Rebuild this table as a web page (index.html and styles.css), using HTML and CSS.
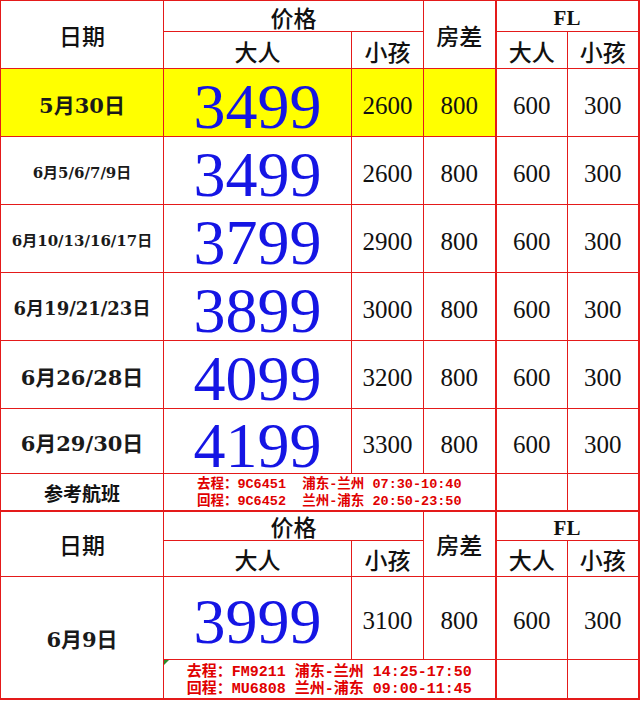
FILE: index.html
```html
<!DOCTYPE html>
<html lang="zh-CN">
<head>
<meta charset="utf-8">
<title>价格表</title>
<link rel="stylesheet" href="styles.css">
</head>
<body>
<table class="price">
  <colgroup>
    <col class="c-date">
    <col class="c-adult">
    <col class="c-child">
    <col class="c-room">
    <col class="c-fla">
    <col class="c-flc">
  </colgroup>
  <tbody>
    <tr class="h-top">
      <td class="head" rowspan="2">日期</td>
      <td class="head" colspan="2">价格</td>
      <td class="head" rowspan="2">房差</td>
      <td class="head fl sep" colspan="2">FL</td>
    </tr>
    <tr class="h-sub">
      <td class="head">大人</td>
      <td class="head">小孩</td>
      <td class="head sep">大人</td>
      <td class="head">小孩</td>
    </tr>
    <tr class="row">
      <td class="date d21 hl">5月30日</td>
      <td class="big hl">3499</td>
      <td class="num hl">2600</td>
      <td class="num hl">800</td>
      <td class="num sep">600</td>
      <td class="num">300</td>
    </tr>
    <tr class="row">
      <td class="date d15">6月5/6/7/9日</td>
      <td class="big">3499</td>
      <td class="num">2600</td>
      <td class="num">800</td>
      <td class="num sep">600</td>
      <td class="num">300</td>
    </tr>
    <tr class="row">
      <td class="date d15">6月10/13/16/17日</td>
      <td class="big">3799</td>
      <td class="num">2900</td>
      <td class="num">800</td>
      <td class="num sep">600</td>
      <td class="num">300</td>
    </tr>
    <tr class="row">
      <td class="date d18">6月19/21/23日</td>
      <td class="big">3899</td>
      <td class="num">3000</td>
      <td class="num">800</td>
      <td class="num sep">600</td>
      <td class="num">300</td>
    </tr>
    <tr class="row">
      <td class="date d21">6月26/28日</td>
      <td class="big">4099</td>
      <td class="num">3200</td>
      <td class="num">800</td>
      <td class="num sep">600</td>
      <td class="num">300</td>
    </tr>
    <tr class="row-last">
      <td class="date d21">6月29/30日</td>
      <td class="big">4199</td>
      <td class="num">3300</td>
      <td class="num">800</td>
      <td class="num sep">600</td>
      <td class="num">300</td>
    </tr>
    <tr class="flight-row">
      <td class="label">参考航班</td>
      <td class="flight" colspan="3">去程：9C6451&nbsp;&nbsp;浦东-兰州 07:30-10:40<br>回程：9C6452&nbsp;&nbsp;兰州-浦东 20:50-23:50</td>
      <td class="sep"></td>
      <td></td>
    </tr>
    <tr class="h-top2">
      <td class="head thick-top" rowspan="2">日期</td>
      <td class="head thick-top" colspan="2">价格</td>
      <td class="head thick-top" rowspan="2">房差</td>
      <td class="head fl sep thick-top" colspan="2">FL</td>
    </tr>
    <tr class="h-sub2">
      <td class="head">大人</td>
      <td class="head">小孩</td>
      <td class="head sep">大人</td>
      <td class="head">小孩</td>
    </tr>
    <tr class="row-tall">
      <td class="date d21 bottom" rowspan="2">6月9日</td>
      <td class="big">3999</td>
      <td class="num">3100</td>
      <td class="num">800</td>
      <td class="num sep">600</td>
      <td class="num">300</td>
    </tr>
    <tr class="flight-row2">
      <td class="flight flight-lg bottom" colspan="3"><span class="note"></span>去程：FM9211 浦东-兰州 14:25-17:50<br>回程：MU6808 兰州-浦东 09:00-11:45</td>
      <td class="sep bottom"></td>
      <td class="bottom"></td>
    </tr>
  </tbody>
</table>
</body>
</html>
```

FILE: styles.css
```css
html, body {
  margin: 0;
  padding: 0;
  background: #ffffff;
}

.price {
  border-collapse: collapse;
  table-layout: fixed;
  width: 639px;
  font-family: "Liberation Serif", "Noto Sans CJK SC", serif;
  color: #111111;
}

.c-date { width: 163px; }
.c-adult { width: 188px; }
.c-child { width: 72px; }
.c-room { width: 72px; }
.c-fla { width: 72px; }
.c-flc { width: 71px; }

.price td {
  border: 1px solid #e41a1a;
  padding: 5px 0 0 0;
  text-align: center;
  vertical-align: middle;
  line-height: 1;
  white-space: nowrap;
}

.price td:last-child {
  border-right: 2px solid #e41a1a;
}

.price td.sep {
  border-left: 2px solid #e41a1a;
}

.price td.thick-top {
  border-top: 2px solid #e41a1a;
}

.price td.bottom {
  border-bottom: 2px solid #e41a1a;
}

.h-top { height: 31px; }
.h-sub { height: 37px; }
.row { height: 68px; }
.row-last { height: 65px; }
.flight-row { height: 36px; }
.h-top2 { height: 29px; }
.h-sub2 { height: 36px; }
.row-tall { height: 83px; }
.flight-row2 { height: 39px; }

.head {
  font-family: "Noto Sans CJK SC", sans-serif;
  font-weight: 500;
  font-size: 23px;
}

.price td.head {
  padding-top: 2px;
}

.head.fl {
  font-family: "Liberation Serif", serif;
  font-weight: bold;
  font-size: 21px;
}

.price td.head.fl {
  padding-top: 5px;
}

.hl {
  background: #ffff00;
}

.date {
  font-family: "DejaVu Serif", "Noto Sans CJK SC", serif;
  font-weight: bold;
  color: #1a1a1a;
}

.d21 { font-size: 21px; }
.d18 { font-size: 18px; }
.d15 { font-size: 15px; }

.big {
  font-family: "Liberation Serif", serif;
  font-size: 64px;
  color: #1515e4;
}

.price td.big {
  line-height: 50px;
  padding-top: 9px;
}

.num {
  font-family: "Liberation Serif", serif;
  font-size: 25px;
}

.price td.num {
  padding-top: 6px;
}

.label {
  font-family: "Noto Sans CJK SC", sans-serif;
  font-weight: bold;
  font-size: 19px;
}

.price td.label {
  padding-top: 1px;
}

.flight {
  font-family: "Liberation Mono", "Noto Sans CJK SC", monospace;
  font-weight: bold;
  font-size: 13.5px;
  color: #e00000;
}

.price td.flight {
  line-height: 17px;
  padding-top: 2px;
}

.flight-lg {
  font-size: 15px;
  position: relative;
}

.price td.flight-lg {
  padding-top: 4px;
}

.note {
  position: absolute;
  left: 0;
  top: 0;
  width: 0;
  height: 0;
  border-top: 5px solid #2d8a2d;
  border-right: 5px solid transparent;
}
```
